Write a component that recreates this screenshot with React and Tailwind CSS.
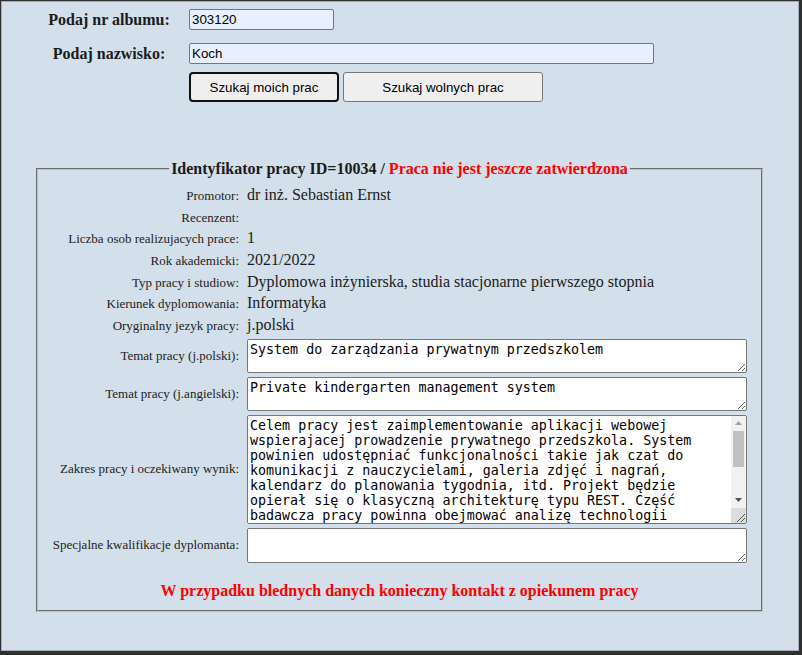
import { useState } from 'react';

const SERIF = "font-['Liberation_Serif',serif]";
const SANS = "font-['Liberation_Sans',Arial,sans-serif]";
const MONO = "font-['DejaVu_Sans_Mono',monospace]";

const INFO_ROWS = [
	{ label: 'Promotor:', value: 'dr inż. Sebastian Ernst' },
	{ label: 'Recenzent:', value: '' },
	{ label: 'Liczba osob realizujacych prace:', value: '1' },
	{ label: 'Rok akademicki:', value: '2021/2022' },
	{ label: 'Typ pracy i studiow:', value: 'Dyplomowa inżynierska, studia stacjonarne pierwszego stopnia' },
	{ label: 'Kierunek dyplomowania:', value: 'Informatyka' },
	{ label: 'Oryginalny jezyk pracy:', value: 'j.polski' },
];

const ZAKRES =
	'Celem pracy jest zaimplementowanie aplikacji webowej wspierajacej prowadzenie prywatnego przedszkola. System powinien udostępniać funkcjonalności takie jak czat do komunikacji z nauczycielami, galeria zdjęć i nagrań, kalendarz do planowania tygodnia, itd. Projekt będzie opierał się o klasyczną architekturę typu REST. Część badawcza pracy powinna obejmować analizę technologii webowych wykorzystywanych do budowy aplikacji.';

const taBase = `ml-[8px] w-[500px] p-[2px] bg-white border border-[#767676] rounded-[2px] text-[13.33px] leading-[normal] text-black ${MONO}`;

// headless chrome hides native scrollbars, so the Zakres box draws its own
const ScrollTextarea = ({ value }) => (
	<div className="ml-[8px] w-[500px] h-[109px] flex bg-white border border-[#767676] rounded-[2px] overflow-hidden">
		<textarea
			defaultValue={value}
			className={`flex-1 h-full p-[2px] resize-none overflow-hidden bg-white text-[13.33px] leading-[normal] text-black ${MONO}`}
		/>
		<div className="w-[15px] h-full flex flex-col bg-[#f1f1f1]">
			<div className="h-[15px] flex items-center justify-center">
				<svg width="7" height="4" viewBox="0 0 7 4"><path d="M0 4 L3.5 0 L7 4 Z" fill="#a3a3a3" /></svg>
			</div>
			<div className="h-[62px] px-[2px]">
				<div className="h-[36px] bg-[#c1c1c1]" />
			</div>
			<div className="h-[15px] flex items-center justify-center">
				<svg width="7" height="4" viewBox="0 0 7 4"><path d="M0 0 L7 0 L3.5 4 Z" fill="#505050" /></svg>
			</div>
			<div className="h-[15px] bg-[#dcdcdc] relative">
				<svg className="absolute right-[1px] bottom-[1px]" width="9" height="9" viewBox="0 0 9 9">
					<path d="M9 1 L1 9 M9 5 L5 9" stroke="#555" strokeWidth="1" />
				</svg>
			</div>
		</div>
	</div>
);

const TEXT_ROWS = [
	{ label: 'Temat pracy (j.polski):', value: 'System do zarządzania prywatnym przedszkolem', h: 'h-[34px]', mt: 'mt-[3px]' },
	{ label: 'Temat pracy (j.angielski):', value: 'Private kindergarten management system', h: 'h-[34px]', mt: 'mt-[4px]' },
	{ label: 'Zakres pracy i oczekiwany wynik:', value: ZAKRES, scroll: true, mt: 'mt-[4px]' },
	{ label: 'Specjalne kwalifikacje dyplomanta:', value: '', h: 'h-[35px]', mt: 'mt-[4px]' },
];

const App = () => {
	const [album, setAlbum] = useState('303120');
	const [nazwisko, setNazwisko] = useState('Koch');

	return (
		<div className="w-[802px] h-[655px] bg-[#2f2f2f] pt-px pl-px pr-[3px] pb-[4px]">
			<div className={`h-full border border-[#a9adb1] bg-[#d3dfea] text-[#1b1b1b] ${SERIF}`}>
				<div className="pl-[27px] pt-[7px]">
					<div className="flex items-center h-[21px]">
						<div className="w-[160px] text-center text-[16px] leading-[21px] font-bold">Podaj nr albumu:</div>
						<input
							value={album}
							onChange={(e) => setAlbum(e.target.value)}
							className={`w-[145px] h-[21px] px-[2px] bg-[#e8f0fe] border border-[#767676] rounded-[2px] text-[13.33px] text-black ${SANS}`}
						/>
					</div>
					<div className="flex items-center h-[21px] mt-[13px]">
						<div className="w-[160px] text-center text-[16px] leading-[21px] font-bold">Podaj nazwisko:</div>
						<input
							value={nazwisko}
							onChange={(e) => setNazwisko(e.target.value)}
							className={`w-[465px] h-[21px] px-[2px] bg-[#e8f0fe] border border-[#767676] rounded-[2px] text-[13.33px] text-black ${SANS}`}
						/>
					</div>
					<div className={`flex gap-[4px] ml-[160px] mt-[8px] text-[13.33px] text-black ${SANS}`}>
						<button className="w-[150px] h-[30px] pt-[1px] bg-[#efefef] border-2 border-[#111] rounded-[4px]">Szukaj moich prac</button>
						<button className="w-[200px] h-[30px] pt-[1px] bg-[#efefef] border border-[#767676] rounded-[3px]">Szukaj wolnych prac</button>
					</div>
				</div>

				<fieldset className="ml-[34px] mt-[58px] w-[727px] [border:2px_groove_#c0c0c0] pl-[8px] pr-[8px] pt-[6px] pb-[10px]">
					<legend className="mx-auto px-[2px] text-[16px] font-bold leading-[18px]">
						Identyfikator pracy ID=10034 / <span className="text-[#ff0000]">Praca nie jest jeszcze zatwierdzona</span>
					</legend>

					{INFO_ROWS.map((row) => (
						<div key={row.label} className="flex items-baseline h-[21.67px]">
							<div className="w-[193px] shrink-0 text-right text-[13px] leading-[normal] text-[#222]">{row.label}</div>
							<div className="ml-[8px] text-[16px] leading-[21.67px]">{row.value || '\u00a0'}</div>
						</div>
					))}

					{TEXT_ROWS.map((row) => (
						<div key={row.label} className={`flex items-center ${row.mt}`}>
							<div className="w-[193px] shrink-0 text-right text-[13px] text-[#222]">{row.label}</div>
							{row.scroll ? (
								<ScrollTextarea value={row.value} />
							) : (
								<textarea defaultValue={row.value} className={`${taBase} ${row.h}`} />
							)}
						</div>
					))}

					<div className="mt-[19px] text-center text-[16px] font-bold leading-[18px] text-[#ff0000]">
						W przypadku blednych danych konieczny kontakt z opiekunem pracy
					</div>
				</fieldset>
			</div>
		</div>
	);
};

export default App;
